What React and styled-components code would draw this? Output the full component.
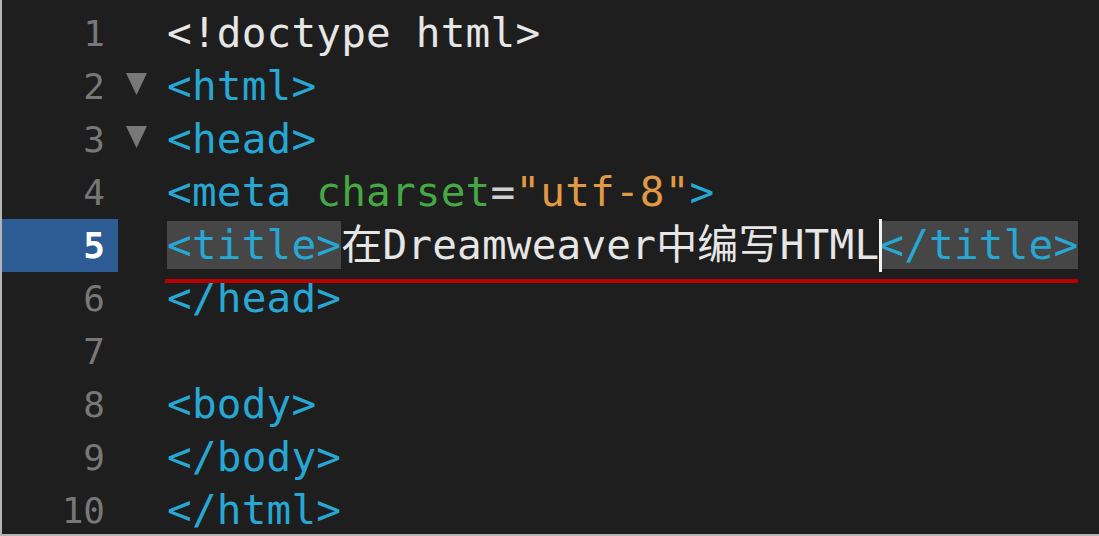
import React from 'react';
import styled, { createGlobalStyle } from 'styled-components';

const GlobalStyle = createGlobalStyle`
  html, body {
    margin: 0;
    padding: 0;
    background: #1e1e1e;
    overflow: hidden;
  }
`;

const Editor = styled.div`
  width: 1099px;
  height: 536px;
  box-sizing: border-box;
  background: #1e1e1e;
  border-left: 2px solid #b4b4b4;
  border-bottom: 2px solid #b4b4b4;
  padding-top: 7px;
  overflow: hidden;
  font-family: "DejaVu Sans Mono", "Noto Sans CJK SC", monospace;
`;

const Row = styled.div`
  display: grid;
  grid-template-columns: 116px 49px 1fr;
  height: 53px;
  line-height: 53px;
`;

const Gutter = styled.div`
  text-align: right;
  padding-right: 13px;
  font-size: 36px;
  color: ${(p) => (p.active ? '#ffffff' : '#787878')};
  font-weight: ${(p) => (p.active ? 'bold' : 'normal')};
  background: ${(p) => (p.active ? '#2d5c94' : 'transparent')};
`;

const Fold = styled.div`
  display: flex;
  align-items: center;
  justify-content: center;
  padding-right: 12px;
  padding-bottom: 6px;
`;

const Code = styled.div`
  font-size: 41px;
  white-space: pre;
  color: #e6e6e6;
  letter-spacing: 0.2px;
`;

const Marked = styled.span`
  position: relative;
  display: inline-block;

  &::after {
    content: '';
    position: absolute;
    left: -2px;
    right: 0;
    bottom: -11px;
    height: 4px;
    background: #b80000;
  }
`;

const Tag = styled.span`
  color: #27a8d4;
  background: ${(p) => (p.boxed ? '#464646' : 'transparent')};
`;

const Attr = styled.span`
  color: #45a845;
`;

const Str = styled.span`
  color: #e09a45;
`;

const Plain = styled.span`
  color: ${(p) => p.tone || '#e6e6e6'};
`;

const Caret = styled.span`
  display: inline-block;
  width: 3px;
  height: 53px;
  margin-right: -3px;
  vertical-align: top;
  background: #f2f2f2;
  position: relative;
  z-index: 1;
`;

const Triangle = () => (
  <svg width="21" height="22" viewBox="0 0 21 22">
    <polygon points="0,0 21,0 10.5,22" fill="#787878" />
  </svg>
);

const lines = [
  { n: 1, code: <Plain>{'<!doctype html>'}</Plain> },
  { n: 2, fold: true, code: <Tag>{'<html>'}</Tag> },
  { n: 3, fold: true, code: <Tag>{'<head>'}</Tag> },
  {
    n: 4,
    code: (
      <>
        <Tag>{'<meta '}</Tag>
        <Attr>charset</Attr>
        <Plain tone="#cfcfcf">=</Plain>
        <Str>"utf-8"</Str>
        <Tag>{'>'}</Tag>
      </>
    ),
  },
  {
    n: 5,
    active: true,
    code: (
      <Marked>
        <Tag boxed>{'<title>'}</Tag>
        <Plain>在Dreamweaver中编写HTML</Plain>
        <Caret />
        <Tag boxed>{'</title>'}</Tag>
      </Marked>
    ),
  },
  { n: 6, code: <Tag>{'</head>'}</Tag> },
  { n: 7, code: null },
  { n: 8, code: <Tag>{'<body>'}</Tag> },
  { n: 9, code: <Tag>{'</body>'}</Tag> },
  { n: 10, code: <Tag>{'</html>'}</Tag> },
];

const App = () => (
  <>
    <GlobalStyle />
    <Editor>
      {lines.map((line) => (
        <Row key={line.n}>
          <Gutter active={line.active}>{line.n}</Gutter>
          <Fold>{line.fold ? <Triangle /> : null}</Fold>
          <Code>{line.code}</Code>
        </Row>
      ))}
    </Editor>
  </>
);

export default App;
